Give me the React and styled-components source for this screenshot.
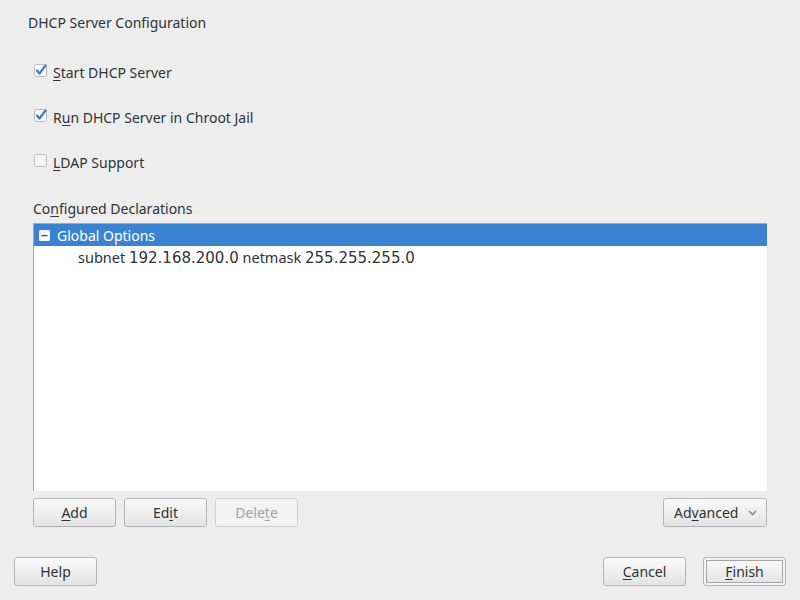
import styled, { createGlobalStyle } from 'styled-components';

const GlobalStyle = createGlobalStyle`
  html, body {
    margin: 0;
    padding: 0;
    background: #ededed;
  }
  body {
    font-family: 'Noto Sans', 'DejaVu Sans', sans-serif;
    font-size: 14px;
    color: #2e3436;
  }
`;

const U = styled.span`
  text-decoration: underline;
  text-underline-offset: 2px;
`;

const Num = styled.span`
  font-family: 'DejaVu Sans', sans-serif;
  font-size: 15px;
`;

function CheckIcon() {
  return (
    <svg width="13" height="13" viewBox="0 0 13 13">
      <rect x="0.5" y="0.5" width="12" height="12" rx="2" fill="#fafafa" stroke="#b9b9b9" />
      <path d="M3 6.5 L5.5 9.5 L11.5 1.5" fill="none" stroke="#3b7fc8" strokeWidth="2.2" strokeLinecap="round" strokeLinejoin="round" />
    </svg>
  );
}

function EmptyBox() {
  return (
    <svg width="13" height="13" viewBox="0 0 13 13">
      <rect x="0.5" y="0.5" width="12" height="12" rx="2" fill="#f5f5f5" stroke="#bdbdbd" />
    </svg>
  );
}

function App() {
  const checks = [
    { on: true, key: 'S', rest: 'tart DHCP Server', pre: '' },
    { on: true, key: 'u', rest: 'n DHCP Server in Chroot Jail', pre: 'R' },
    { on: false, key: 'L', rest: 'DAP Support', pre: '' },
  ];

  return (
    <Page>
      <GlobalStyle />
      <Title>DHCP Server Configuration</Title>
      <Checks>
        {checks.map((c, i) => (
          <CheckRow key={i}>
            <BoxWrap>{c.on ? <CheckIcon /> : <EmptyBox />}</BoxWrap>
            <span>
              {c.pre}
              <U>{c.key}</U>
              {c.rest}
            </span>
          </CheckRow>
        ))}
      </Checks>

      <Section>
        <SectionLabel>
          Co<U>n</U>figured Declarations
        </SectionLabel>
        <Tree>
          <TreeRow selected>
            <Expander>
              <svg width="11" height="11" viewBox="0 0 11 11">
                <rect x="0" y="0" width="11" height="11" rx="1.5" fill="#f4f6f9" />
                <rect x="2.5" y="5" width="6" height="1.2" fill="#4a4a4a" />
              </svg>
            </Expander>
            Global Options
          </TreeRow>
          <TreeRow indent={44} large>
            <span>
              subnet <Num>192.168.200.0</Num> netmask <Num>255.255.255.0</Num>
            </span>
          </TreeRow>
        </Tree>
        <ButtonBar>
          <Group>
            <Button>
              <U>A</U>dd
            </Button>
            <Button>
              Ed<U>i</U>t
            </Button>
            <Button disabled>
              Dele<U>t</U>e
            </Button>
          </Group>
          <MenuButton>
            <span>
              Ad<U>v</U>anced
            </span>
            <svg width="9" height="6" viewBox="0 0 9 6">
              <path d="M1 1 L4.5 4.5 L8 1" fill="none" stroke="#8a8a8a" strokeWidth="1.6" />
            </svg>
          </MenuButton>
        </ButtonBar>
      </Section>

      <Footer>
        <Button>Help</Button>
        <Group gap={17}>
          <Button>
            <U>C</U>ancel
          </Button>
          <Button primary>
            <U>F</U>inish
          </Button>
        </Group>
      </Footer>
    </Page>
  );
}

const Page = styled.div`
  width: 800px;
  height: 600px;
  display: flex;
  flex-direction: column;
  box-sizing: border-box;
`;

const Title = styled.div`
  padding: 13px 0 0 28px;
  height: 20px;
  line-height: 20px;
`;

const Checks = styled.div`
  display: flex;
  flex-direction: column;
  gap: 25px;
  padding: 29px 0 0 34px;
`;

const CheckRow = styled.div`
  display: flex;
  align-items: center;
  gap: 6px;
  height: 20px;
`;

const BoxWrap = styled.div`
  display: flex;
  width: 13px;
  height: 13px;
  margin-top: -3px;
`;

const Section = styled.div`
  display: flex;
  flex-direction: column;
  padding: 0 33px;
  margin-top: 27px;
`;

const SectionLabel = styled.div`
  height: 20px;
  line-height: 20px;
  margin-bottom: 4px;
`;

const Tree = styled.div`
  height: 267px;
  background: #ffffff;
  border-top: 1px solid #a8a8a8;
  border-left: 1px solid #a8a8a8;
  display: flex;
  flex-direction: column;
`;

const TreeRow = styled.div`
  display: flex;
  align-items: center;
  height: 22px;
  font-size: ${(p) => (p.large ? 14.5 : 14)}px;
  padding-left: ${(p) => (p.indent ? p.indent : 5)}px;
  background: ${(p) => (p.selected ? '#3b83d0' : 'transparent')};
  color: ${(p) => (p.selected ? '#ffffff' : '#2e3436')};
`;

const Expander = styled.span`
  display: flex;
  margin-right: 7px;
`;

const ButtonBar = styled.div`
  display: flex;
  justify-content: space-between;
  margin-top: 7px;
`;

const Group = styled.div`
  display: flex;
  gap: ${(p) => (p.gap ? p.gap : 8)}px;
`;

const Button = styled.button`
  width: 83px;
  height: 29px;
  box-sizing: border-box;
  border-radius: 3px;
  font-family: 'Noto Sans', 'DejaVu Sans', sans-serif;
  font-size: 14px;
  color: ${(p) => (p.disabled ? '#a0a3a4' : '#2e3436')};
  border: 1px solid ${(p) => (p.disabled ? '#cfcfcf' : '#b3b3b3')};
  background: ${(p) =>
    p.disabled ? '#f2f2f2' : 'linear-gradient(#fafafa, #e3e3e3)'};
  box-shadow: ${(p) => (p.primary ? 'inset 0 0 0 2px #f4f4f4, inset 0 0 0 3px #a6a6a6' : 'none')};
  padding: 0;
  display: flex;
  align-items: center;
  justify-content: center;
`;

const MenuButton = styled(Button)`
  width: 104px;
  justify-content: space-between;
  padding: 0 9px 0 10px;
`;

const Footer = styled.div`
  display: flex;
  justify-content: space-between;
  padding: 0 14px 0 14px;
  margin-top: 30px;
`;

export default App;
